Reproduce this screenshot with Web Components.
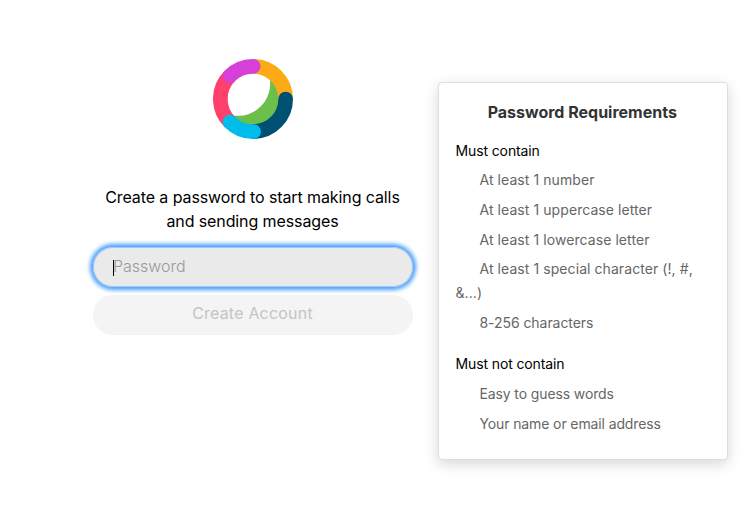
<!DOCTYPE html>
<html lang="en">
<head>
<meta charset="utf-8">
<title>Create a password</title>
<style>
  body { margin: 0; background: #fff; font-family: Inter, "Liberation Sans", sans-serif; }
</style>
</head>
<body>
<signup-page></signup-page>

<script>
const CONTAIN = [
  'At least 1 number',
  'At least 1 uppercase letter',
  'At least 1 lowercase letter',
  'At least 1 special character (!, #, &...)',
  '8-256 characters',
];

const NOT_CONTAIN = [
  'Easy to guess words',
  'Your name or email address',
];

class RingLogo extends HTMLElement {
  constructor() {
    super();
    this.attachShadow({ mode: 'open' }).innerHTML = `
      <style>
        :host { display: block; width: 80px; height: 80px; }
        svg { display: block; }
      </style>
      <svg width="80" height="80" viewBox="-40 -40 80 80" fill="none" stroke-width="14.7" stroke-linecap="round">
        <path d="M16.5 -21.5 A32 32 0 0 1 -21 16.2 A27 27 0 0 0 16.5 21.5 A27 27 0 0 0 16.5 -21.5Z" fill="#6cc04a"/>
        <path d="M-23.1 23.1 A32.65 32.65 0 0 1 -23.1 -23.1" stroke="#ff3f6c" stroke-linecap="butt"/>
        <path d="M0 -32.65 A32.65 32.65 0 0 1 32.65 0" stroke="#fcab16" stroke-linecap="butt"/>
        <path d="M32.65 0 A32.65 32.65 0 0 1 1 32.63" stroke="#005073"/>
        <path d="M-23.1 23.1 A32.65 32.65 0 0 0 .5 32.64" stroke="#00bceb"/>
        <path d="M-23.1 -23.1 A32.65 32.65 0 0 1 .2 -32.65" stroke="#d640d9"/>
      </svg>
    `;
  }
}

class PasswordField extends HTMLElement {
  constructor() {
    super();
    this.attachShadow({ mode: 'open' }).innerHTML = `
      <style>
        :host {
          display: flex; align-items: center; position: relative;
          box-sizing: border-box; height: 40px; padding: 0 20px 2px;
          border-radius: 20px; background: #eaeaea; color: #999;
          box-shadow: inset 0 0 0 1px #a4c8ee, 0 0 4px 3px #459eff;
          font-size: 16px; font-weight: 300;
        }
        .caret { position: absolute; left: 20px; top: 13px; width: 1px; height: 16px; background: #000; }
      </style>
      <slot></slot><span class="caret"></span>
    `;
  }
}

class PillButton extends HTMLElement {
  constructor() {
    super();
    this.attachShadow({ mode: 'open' }).innerHTML = `
      <style>
        :host { display: block; }
        button {
          display: block; width: 100%; height: 40px; padding: 0 1px 4px 0;
          border: 0; border-radius: 20px; background: #f4f4f4; color: #c4c4c4;
          font: inherit; font-size: 16px; letter-spacing: .2px;
        }
      </style>
      <button disabled><slot></slot></button>
    `;
  }
}

class RequirementList extends HTMLElement {
  constructor() {
    super();
    this.attachShadow({ mode: 'open' }).innerHTML = `
      <style>
        :host { display: block; font-size: 14px; line-height: 24px; letter-spacing: -.12px; }
        h3 { margin: 0; font: inherit; color: #000; }
        ul { margin: 0; padding: 0; list-style: none; color: #666; }
        :host(.must) ul { margin-top: -.6px; letter-spacing: .07px; }
        :host(.must) li:last-child { letter-spacing: -.06px; }
        li { padding-top: 5.75px; text-indent: 24px; }
      </style>
      <h3></h3>
      <ul></ul>
    `;
  }

  set items(items) {
    const list = this.shadowRoot.querySelector('ul');
    list.innerHTML = '';
    for (const item of items) {
      const li = document.createElement('li');
      li.textContent = item;
      list.appendChild(li);
    }
  }

  connectedCallback() {
    this.shadowRoot.querySelector('h3').textContent = this.getAttribute('heading');
  }
}

class RequirementsCard extends HTMLElement {
  constructor() {
    super();
    this.attachShadow({ mode: 'open' }).innerHTML = `
      <style>
        :host {
          display: block; box-sizing: border-box; width: 290px; height: 378px;
          padding: 17px 17px 0 16.5px; border: 1px solid #dedede; border-radius: 4px;
          background: #fff; box-shadow: 0 4px 14px rgba(0, 0, 0, .16);
        }
        h2 { margin: 0 1px 15px 0; font-size: 16px; line-height: 24px; font-weight: 700; text-align: center; color: #333; }
        .not { margin-top: 17px; }
      </style>
      <h2>Password Requirements</h2>
      <requirement-list class="must" heading="Must contain"></requirement-list>
      <requirement-list class="not" heading="Must not contain"></requirement-list>
    `;
  }

  connectedCallback() {
    this.shadowRoot.querySelector('.must').items = CONTAIN;
    this.shadowRoot.querySelector('.not').items = NOT_CONTAIN;
  }
}

class SignupPage extends HTMLElement {
  constructor() {
    super();
    this.attachShadow({ mode: 'open' }).innerHTML = `
      <style>
        :host {
          display: flex; align-items: flex-start; gap: 25px;
          box-sizing: border-box; height: 516px; padding: 59px 25px 0 93px;
        }
        .form { display: flex; flex-direction: column; width: 320px; flex: none; }
        ring-logo { align-self: center; }
        p { margin: 46px 1px 14px 0; font-size: 16px; line-height: 24px; letter-spacing: -.1px; text-align: center; color: #000; }
        pill-button { margin-top: 8px; }
        requirements-card { margin-top: 23px; flex: none; }
      </style>
      <div class="form">
        <ring-logo></ring-logo>
        <p>Create a password to start making calls<br>and sending messages</p>
        <password-field>Password</password-field>
        <pill-button>Create Account</pill-button>
      </div>
      <requirements-card></requirements-card>
    `;
  }
}

customElements.define('ring-logo', RingLogo);
customElements.define('password-field', PasswordField);
customElements.define('pill-button', PillButton);
customElements.define('requirement-list', RequirementList);
customElements.define('requirements-card', RequirementsCard);
customElements.define('signup-page', SignupPage);
</script>
</body>
</html>
